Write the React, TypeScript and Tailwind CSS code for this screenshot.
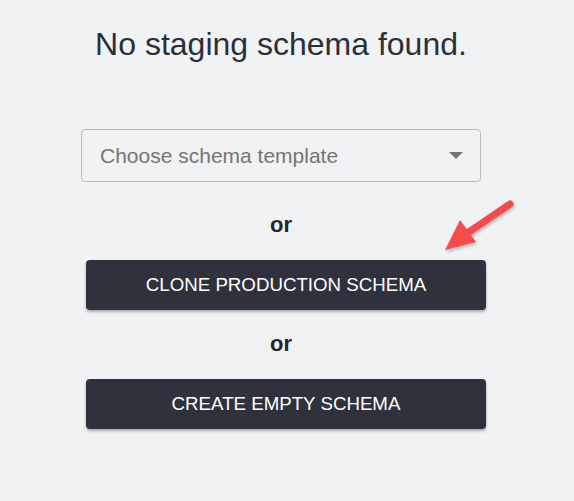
function Arrow() {
  return (
    <svg
      className="absolute left-[436px] top-[194px]"
      width="86"
      height="66"
      viewBox="0 0 86 66"
    >
      <defs>
        <filter id="sh" x="-20%" y="-20%" width="140%" height="140%">
          <feDropShadow dx="1" dy="2" stdDeviation="1.5" floodColor="#000" floodOpacity="0.25" />
        </filter>
      </defs>
      <g filter="url(#sh)">
        <line x1="74" y1="10" x2="30" y2="40" stroke="#f44b4b" strokeWidth="7" strokeLinecap="round" />
        <polygon points="9,56 24,26 40,48" fill="#f44b4b" />
      </g>
    </svg>
  );
}

export default function App() {
  return (
    <div
      className="relative w-[574px] h-[501px] bg-[#f1f2f4] flex flex-col items-center font-['Liberation_Sans',Arial,sans-serif]"
    >
      <h1 className="mt-[24px] text-[32px] leading-[40px] text-[#2b2f38] ml-[-12px]">
        No staging schema found.
      </h1>

      <div className="mt-[65px] ml-[-12px] w-[400px] h-[53px] border border-[#bcbcbc] rounded-[4px] flex items-center justify-between pl-[18px] pr-[17px]">
        <span className="text-[21px] text-[#757575]">Choose schema template</span>
        <svg width="14" height="7" viewBox="0 0 14 7">
          <polygon points="0,0 14,0 7,7" fill="#757575" />
        </svg>
      </div>

      <div className="mt-[31px] ml-[-12px] text-[22px] leading-[24px] font-black text-[#23262d]">or</div>

      <button className="mt-[23px] ml-[-2px] w-[400px] h-[50px] rounded-[4px] bg-[#2f323d] text-white text-[18.7px] uppercase shadow-[0_2px_3px_rgba(0,0,0,0.3)]">
        Clone production schema
      </button>

      <div className="mt-[22px] ml-[-12px] text-[22px] leading-[24px] font-black text-[#23262d]">or</div>

      <button className="mt-[23px] ml-[-2px] w-[400px] h-[50px] rounded-[4px] bg-[#2f323d] text-white text-[18.7px] uppercase shadow-[0_2px_3px_rgba(0,0,0,0.3)]">
        Create empty schema
      </button>

      <Arrow />
    </div>
  );
}
